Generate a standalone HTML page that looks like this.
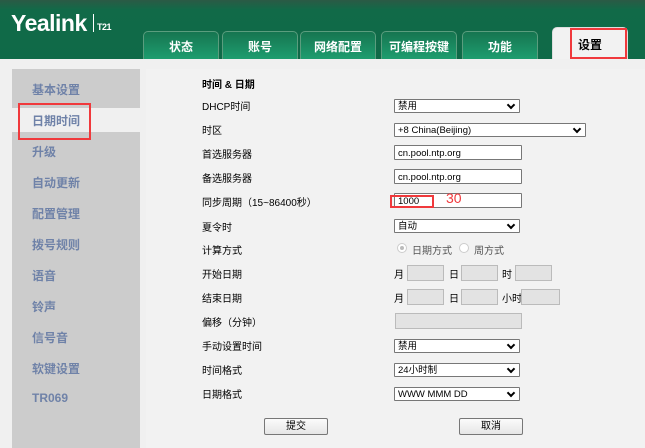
<!DOCTYPE html><html><head><meta charset="utf-8"><style>
*{margin:0;padding:0;box-sizing:border-box}
body{width:645px;height:448px;overflow:hidden;background:#f0f0f0;font-family:"Liberation Sans","Noto Sans CJK SC",sans-serif;position:relative}
.hd{position:absolute;left:0;top:0;width:645px;height:59px;background:linear-gradient(#2b5a45 0,#116a48 10px,#0f6a48 100%)}
.logo{position:absolute;left:11px;top:10px;color:#fff;font-size:23px;font-weight:bold;letter-spacing:-0.5px}
.logo i{position:absolute;left:82px;top:4px;width:1px;height:18px;background:#fff}
.logo b{position:absolute;left:86px;top:12px;font-size:9px}
.tab{position:absolute;top:31px;height:28px;width:76px;border:1px solid #5b9d7e;border-bottom:none;border-radius:5px 5px 0 0;background:linear-gradient(#167550,#1e9d6f);color:#fff;font-weight:bold;font-size:12px;text-align:center;line-height:30px}
.tab.on{top:27px;height:32px;background:#f2f2f2;color:#000;border-color:#ddd;line-height:34px}
.side{position:absolute;left:12px;top:69px;width:128px;height:379px;background:#cccccc}
.si{position:absolute;left:32px;font-size:12px;font-weight:bold;color:#6f82a8}
.act{position:absolute;left:12px;top:108px;width:134px;height:24px;background:#f0f0f0}
.cont{position:absolute;left:146px;top:69px;width:499px;height:379px;background:#f2f2f2}
.l{position:absolute;left:202px;font-size:10px;color:#000}
.sel,.inp{position:absolute;left:394px;width:126px;height:14px;background:#fff;border:1px solid #777;font-size:9.5px;line-height:14px;padding-left:3px;border-radius:1px}
.sel:after{content:"";position:absolute;right:5px;top:2px;width:4px;height:4px;border-right:2px solid #000;border-bottom:2px solid #000;transform:rotate(45deg)}
.inp{height:15px;width:128px;line-height:15px}
.g{position:absolute;height:16px;background:#e3e3e3;border:1px solid #bbb}
.s{position:absolute;font-size:10px}
.btn{position:absolute;top:418px;width:64px;height:17px;border:1px solid #777;border-radius:2px;background:linear-gradient(#fbfbfb,#e6e6e6);font-size:10px;text-align:center;line-height:15px}
.red{position:absolute;border:2px solid #f0393c}
.rad{position:absolute;top:243px;width:10px;height:10px;border-radius:50%;border:1px solid #ccc;background:#fff}
</style></head><body>
<div class="hd"><div class="logo">Yealink<i></i><b>T21</b></div></div>
<div class="tab" style="left:143px">状态</div>
<div class="tab" style="left:222px">账号</div>
<div class="tab" style="left:300px">网络配置</div>
<div class="tab" style="left:381px">可编程按键</div>
<div class="tab" style="left:462px">功能</div>
<div class="tab on" style="left:552px">设置</div>
<div class="side"></div><div class="cont"></div><div class="act"></div>
<div class="si" style="top:81px">基本设置</div><div class="si" style="top:112px">日期时间</div><div class="si" style="top:143px">升级</div><div class="si" style="top:174px">自动更新</div><div class="si" style="top:205px">配置管理</div><div class="si" style="top:236px">拨号规则</div><div class="si" style="top:267px">语音</div><div class="si" style="top:298px">铃声</div><div class="si" style="top:329px">信号音</div><div class="si" style="top:360px">软键设置</div><div class="si" style="top:391px">TR069</div>
<div class="l" style="top:76px;font-weight:bold">时间 &amp; 日期</div>
<div class="l" style="top:98px">DHCP时间</div><div class="l" style="top:122px">时区</div><div class="l" style="top:146px">首选服务器</div><div class="l" style="top:170px">备选服务器</div><div class="l" style="top:194px">同步周期（15~86400秒）</div><div class="l" style="top:219px">夏令时</div><div class="l" style="top:242px">计算方式</div><div class="l" style="top:266px">开始日期</div><div class="l" style="top:290px">结束日期</div><div class="l" style="top:314px">偏移（分钟）</div><div class="l" style="top:338px">手动设置时间</div><div class="l" style="top:362px">时间格式</div><div class="l" style="top:386px">日期格式</div>
<div class="sel" style="top:99px">禁用</div>
<div class="sel" style="top:123px;width:192px">+8 China(Beijing)</div>
<div class="inp" style="top:145px">cn.pool.ntp.org</div>
<div class="inp" style="top:169px">cn.pool.ntp.org</div>
<div class="inp" style="top:193px">1000</div>
<div class="sel" style="top:219px">自动</div>
<div class="rad" style="left:397px"><div style="margin:2px;width:4px;height:4px;border-radius:50%;background:#bbb"></div></div><div class="s" style="left:412px;top:242px;color:#555">日期方式</div>
<div class="rad" style="left:459px"></div><div class="s" style="left:474px;top:242px;color:#555">周方式</div>
<div class="s" style="left:394px;top:266px">月</div><div class="g" style="left:407px;top:265px;width:37px"></div><div class="s" style="left:449px;top:266px">日</div><div class="g" style="left:461px;top:265px;width:37px"></div><div class="s" style="left:502px;top:266px">时</div><div class="g" style="left:515px;top:265px;width:37px"></div>
<div class="s" style="left:394px;top:290px">月</div><div class="g" style="left:407px;top:289px;width:37px"></div><div class="s" style="left:449px;top:290px">日</div><div class="g" style="left:461px;top:289px;width:37px"></div><div class="s" style="left:502px;top:290px">小时</div><div class="g" style="left:521px;top:289px;width:39px"></div>
<div class="g" style="left:395px;top:313px;width:127px"></div>
<div class="sel" style="top:339px">禁用</div>
<div class="sel" style="top:363px">24小时制</div>
<div class="sel" style="top:387px">WWW MMM DD</div>
<div class="btn" style="left:264px">提交</div><div class="btn" style="left:459px">取消</div>
<div class="red" style="left:18px;top:103px;width:73px;height:37px"></div>
<div class="red" style="left:570px;top:28px;width:57px;height:31px"></div>
<div class="red" style="left:390px;top:195px;width:44px;height:13px"></div>
<div style="position:absolute;left:446px;top:190px;color:#f0393c;font-size:14px">30</div>
</body></html>
